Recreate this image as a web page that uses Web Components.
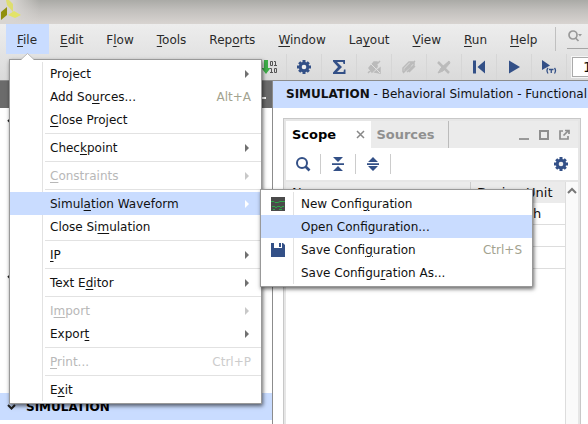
<!DOCTYPE html>
<html lang="en">
<head>
<meta charset="utf-8">
<title>Simulation</title>
<style>
  html, body { height: 100%; margin: 0; overflow: hidden; }
  body { font: 12px/16px "DejaVu Sans", sans-serif; color: #1a1a1a; background: #fff; }
</style>
</head>
<body>
<ide-window></ide-window>

<template id="t-window">
<style>
  :host { display: flex; flex-direction: column; height: 100vh; position: relative; overflow: hidden; }
  .title { flex: none; height: 24px; background: linear-gradient(#aaaaa6, #c0bebb 40%, #d8d4d1); }
  .title::before { content: ""; position: absolute; width: 40px; height: 24px; background: linear-gradient(90deg, #d8d5d2 30%, transparent); }
  .title svg { display: block; position: relative; }
  .top { flex: none; background: linear-gradient(#ededed, #dadada); border-bottom: 1px solid #8c8c8c; }
  .menus { display: flex; height: 30px; padding-left: 6px; }
  .divider { margin: 3px 11px 3px 6px; width: 1px; background: #c0c0c0; flex: none; }
  .search { display: flex; align-items: center; padding: 0; border: 0; border-bottom: 1px solid #a5a5a5; background: none; height: 25px; flex: 1; overflow: hidden; }
  .search svg { flex: none; }
  .tools { display: flex; height: 26px; justify-content: flex-end; overflow: hidden; }
  .time { box-sizing: border-box; width: 16px; height: 20px; margin: 3px 0 0 5px; border: 1px solid #aaa; border-right: 0; outline: 1px solid #f5f5f5; padding: 0 0 0 10px; font: 14px "DejaVu Sans", sans-serif; background: #fff; color: #111; }
  .main { flex: 1; display: flex; min-height: 0; }
  flow-navigator { width: 272px; flex: none; }
  sim-area { flex: 1; min-width: 0; border-left: 1px solid #8c8c8c; }
  .file { position: absolute; left: 9px; top: 59px; width: 253px; }
  .wave { position: absolute; left: 260px; top: 189px; width: 273px; }
  .notch { position: absolute; left: 20px; top: 53px; }
</style>
<div class="title"><svg width="22" height="21" viewBox="0 0 22 21"><path d="M6 0h3l4 4v8L7 5z" fill="#dede70"/><path d="M1 12l6-5v8l-6 5z" fill="#91900d"/><path d="M8 15l6-4 7 4-6 3z" fill="#e2e368"/></svg></div>
<div class="top">
  <nav class="menus" aria-label="Main">
    <menu-tab open><u>F</u>ile</menu-tab><menu-tab><u>E</u>dit</menu-tab><menu-tab>F<u>l</u>ow</menu-tab><menu-tab><u>T</u>ools</menu-tab><menu-tab>Rep<u>o</u>rts</menu-tab><menu-tab><u>W</u>indow</menu-tab><menu-tab>La<u>y</u>out</menu-tab><menu-tab><u>V</u>iew</menu-tab><menu-tab><u>R</u>un</menu-tab><menu-tab><u>H</u>elp</menu-tab>
    <div class="divider"></div>
    <button class="search" aria-label="Quick access"><svg width="16" height="14" viewBox="0 0 16 14" fill="none" stroke="#999" stroke-width="1.7"><circle cx="6" cy="6" r="4"/><path d="M8.500 9l3 3"/><path d="M11 5h4l-2 2.500z" fill="#999" stroke="none"/></svg></button>
  </nav>
  <div class="tools">
    <tool-button label="Generate bitstream"><svg width="16" height="16" viewBox="0 0 16 16"><path d="M3 1h4v8h2.500L5 15 .5 9H3z" fill="#3fae4a"/><g fill="none" stroke="#555"><path d="M9.500 2.500h2v4h-2zM13 2.500h1.500v4M13 6.500h3M9 9.500h1.500v4M9 13.500h3M13.500 9.500h2v4h-2z"/></g></svg></tool-button>
    <tool-button label="Settings"><gear-icon></gear-icon></tool-button>
    <tool-button label="Report summary"><svg width="16" height="16" viewBox="0 0 16 16"><path d="M2 1h12v4h-1.500L12 3H6l5 5-5 5h6.500l.5-2.500h1.500V15H2v-1.500L7 8 2 2.500z" fill="#335087"/></svg></tool-button>
    <tool-button label="Highlight"><svg width="16" height="16" viewBox="0 0 16 16"><path d="M2 14L14 2M3 9l5-6 3 0 0 5-5 5zM9 13l5-4v5z" fill="#bbb" stroke="#bbb" stroke-width="1.500"/><path d="M2 2l12 12" stroke="#e0e0e0"/></svg></tool-button>
    <tool-button label="Mark"><svg width="16" height="16" viewBox="0 0 16 16" fill="none" stroke="#bbb" stroke-width="1.500"><path d="M2 13V9l6-6 3 0-7 7v2l6-5M6 13l7-7V3l-3 3M2 14L14 2M8 13l6-6"/></svg></tool-button>
    <tool-button label="Unmark"><svg width="16" height="16" viewBox="0 0 16 16" fill="none" stroke="#bbb"><path d="M2 3l11 11" stroke-width="2.500"/><path d="M2 14l3-5 8-7 1 2-7 8z" fill="#bbb"/></svg></tool-button>
    <tool-button label="Restart"><svg width="16" height="16" viewBox="0 0 16 16"><path d="M2 1.500h3v13H2zM14 1.500v13L6.500 8z" fill="#335087"/></svg></tool-button>
    <tool-button label="Run all"><svg width="16" height="16" viewBox="0 0 16 16"><path d="M3 1.500L14 8 3 14.500z" fill="#335087"/></svg></tool-button>
    <tool-button label="Run for time"><svg width="16" height="16" viewBox="0 0 16 16"><path d="M1 1l8 5.500L1 11z" fill="#335087"/><path d="M7 9q-2 2.500 0 5.500M13.500 9q2 2.500 0 5.500M8 10.500h4.500M10.250 10.500V14" fill="none" stroke="#335087" stroke-width="1.300"/></svg></tool-button>
    <input class="time" aria-label="Run time" value="10">
  </div>
</div>
<div class="main"><flow-navigator></flow-navigator><sim-area></sim-area></div>
<popup-menu class="file">
  <menu-entry sub>Pro<u>j</u>ect</menu-entry>
  <menu-entry keys="Alt+A">Add So<u>u</u>rces...</menu-entry>
  <menu-entry><u>C</u>lose Project</menu-entry>
  <menu-line></menu-line>
  <menu-entry sub>Chec<u>k</u>point</menu-entry>
  <menu-line></menu-line>
  <menu-entry sub disabled><u>C</u>onstraints</menu-entry>
  <menu-line></menu-line>
  <menu-entry sub active>Simul<u>a</u>tion Waveform</menu-entry>
  <menu-entry>Close Si<u>m</u>ulation</menu-entry>
  <menu-line></menu-line>
  <menu-entry sub><u>I</u>P</menu-entry>
  <menu-line></menu-line>
  <menu-entry sub>Text E<u>d</u>itor</menu-entry>
  <menu-line></menu-line>
  <menu-entry sub disabled>I<u>m</u>port</menu-entry>
  <menu-entry sub>Expor<u>t</u></menu-entry>
  <menu-line></menu-line>
  <menu-entry disabled keys="Ctrl+P"><u>P</u>rint...</menu-entry>
  <menu-line></menu-line>
  <menu-entry>E<u>x</u>it</menu-entry>
</popup-menu>
<svg class="notch" width="16" height="8" viewBox="0 0 16 8"><path d="M1 7L7.500 .5 14 7v1H1z" fill="#fff"/><path d="M1 6.500L7.500 .5 14 6.500" fill="none" stroke="#bbb"/></svg>
<popup-menu class="wave">
  <menu-entry><svg slot="icon" width="14" height="14" viewBox="0 0 14 14"><path d="M0 0h14v14H0z" fill="#4a4a4a"/><path d="M0 4.500h3l1 1h3l2-1h5M1 9.500h3l1 1.500 1-1.500h3l1 1.500 1-1.500h2M2 12.500h2M8 12.500h3" fill="none" stroke="#2fa84a"/></svg>New Confi<u>g</u>uration</menu-entry>
  <menu-entry active>Open Configuration...</menu-entry>
  <menu-entry keys="Ctrl+S"><svg slot="icon" width="14" height="14" viewBox="0 0 14 14"><path d="M0 0h3v5h8V0h1l2 2v12H0z" fill="#335087"/><path d="M3 0h8v5H3z" fill="#fff"/><path d="M8 0h2v4H8z" fill="#335087"/></svg>Save Confi<u>g</u>uration</menu-entry>
  <menu-entry>Save Configu<u>r</u>ation As...</menu-entry>
</popup-menu>
</template>

<template id="t-tab">
<style>
  :host { display: block; flex: none; }
  button { height: 30px; border: 0; padding: 2px 12px 0 11px; background: none; font: inherit; color: #2a2a2a; }
  :host([open]) button { background: #c9dcff; }
  ::slotted(u) { text-underline-offset: 2px; text-decoration-thickness: 1px; }
</style>
<button><slot></slot></button>
</template>

<template id="t-tool">
<style>
  :host { display: block; flex: none; width: 34px; border-right: 1px solid #d6d6d6; }
  button { width: 100%; height: 26px; border: 0; padding: 0; background: none; display: grid; place-items: center; }
</style>
<button><slot></slot></button>
</template>

<template id="t-gear">
<style>:host, svg { display: block; }</style>
<svg width="14" height="14" viewBox="-7 -7 14 14"><g fill="#335087"><circle r="5.200"/><path d="M-1.500-7h3V7h-3zM-7-1.500H7v3H-7z"/><path d="M-1.500-6.800h3V6.800h-3zM-6.800-1.500H6.800v3H-6.800z" transform="rotate(45)"/></g><circle r="2.300" fill="#f0f0f0"/></svg>
</template>

<template id="t-popup">
<style>
  :host { display: block; box-sizing: border-box; background: #fff; border: 1px solid #999; padding: 2px 0; box-shadow: 1px 2px 4px #0009; }
  div { background: linear-gradient(#e2e2e2, #e2e2e2) 32px 0 / 1px 100% no-repeat; }
</style>
<div role="menu"><slot></slot></div>
</template>

<template id="t-entry">
<style>
  :host { display: block; }
  button { width: 100%; height: 23px; border: 0; padding: 0 10px 0 0; background: none; display: flex; align-items: center; font: inherit; color: #111; text-align: left; }
  :host([active]) button { background: #c9dcff; }
  :host([disabled]) button { color: #b8b8b8; }
  .icon { width: 40px; flex: none; display: flex; padding-left: 10px; box-sizing: border-box; }
  .text { flex: 1; white-space: nowrap; }
  .keys { color: #a3a38f; }
  :host([disabled]) .keys { color: #ccc; }
  .arrow { display: none; margin-right: 2px; color: #707070; }
  :host([sub]) .arrow { display: block; }
  :host([disabled]) .arrow { color: #c8c8c8; }
  :host([active]) .arrow { color: #fff; }
  ::slotted(u) { text-underline-offset: 2px; text-decoration-thickness: 1px; }
</style>
<button role="menuitem"><span class="icon"><slot name="icon"></slot></span><span class="text"><slot></slot></span><span class="keys"></span><svg class="arrow" width="4" height="8" viewBox="0 0 4 8"><path d="M0 0l4 4-4 4z" fill="currentColor"/></svg></button>
</template>

<template id="t-line">
<style>:host { display: block; height: 1px; margin: 2px 0 2px 35px; background: #e2e2e2; }</style>
</template>

<template id="t-nav">
<style>
  :host { display: flex; flex-direction: column; background: #fff; }
  .head { height: 27px; flex: none; background: #6b6b6b; display: flex; justify-content: flex-end; }
  button { border: 0; background: none; padding: 0; font: inherit; }
  .min { width: 11px; }
  .min::before { content: ""; display: block; width: 5px; height: 2px; background: #fff; margin-top: 6px; }
  .sec { height: 27px; display: flex; align-items: center; padding-left: 7px; gap: 10px; font-weight: bold; flex: none; color: #000; text-align: left; }
  .b { margin-top: 129px; }
  .cur { margin-top: 102px; background: #c9dcff; }
  path { fill: none; stroke: #222; stroke-width: 2; }
</style>
<div class="head"><button class="min" aria-label="Minimize"></button></div>
<button class="sec" aria-label="Project manager"><svg width="9" height="6" viewBox="0 0 9 6"><path d="M1 1l3.500 3.500L8 1"/></svg></button>
<button class="sec b" aria-label="IP integrator"><svg width="9" height="6" viewBox="0 0 9 6"><path d="M1 1l3.500 3.500L8 1"/></svg></button>
<button class="sec cur"><svg width="9" height="6" viewBox="0 0 9 6"><path d="M1 1l3.500 3.500L8 1"/></svg>SIMULATION</button>
</template>

<template id="t-sim">
<style>
  :host { display: flex; flex-direction: column; background: #fff; }
  header { height: 27px; line-height: 26px; flex: none; background: #c9dcff; color: #111; padding-left: 13px; white-space: nowrap; overflow: hidden; }
  scope-panel { flex: 1; margin: 10px 7px 0 10px; min-height: 0; }
</style>
<header><b>SIMULATION</b> - Behavioral Simulation - Functional</header>
<scope-panel></scope-panel>
</template>

<template id="t-scope">
<style>
  :host { border: 1px solid #c8c8c8; border-bottom: 0; background: #e6e6e6; padding: 2px 2px 0; display: flex; flex-direction: column; }
  button { border: 0; background: none; padding: 0; font: inherit; display: grid; place-items: center; }
  .tabs { display: flex; height: 27px; background: #ebebeb; flex: none; }
  .scope, .sources { font-size: 13px; font-weight: bold; }
  .scope { background: #fff; display: flex; align-items: center; width: 85px; padding: 0 6px; box-sizing: border-box; justify-content: space-between; color: #000; }
  .sources { width: 78px; border-right: 1px solid #bbb; color: #909090; padding-right: 8px; }
  .ctl { margin-left: auto; display: flex; gap: 8px; padding-right: 8px; }
  .tools { display: flex; height: 32px; background: #fff; align-items: center; flex: none; margin-bottom: 2px; }
  .tools button { width: 34px; height: 20px; border-right: 1px solid #ccc; box-sizing: content-box; }
  .tools .set { margin-left: auto; border: 0; }
  .body { display: flex; flex: 1; background: #fff; min-height: 0; overflow: hidden; }
  .grid { flex: 1; }
  table { width: 100%; border-collapse: collapse; table-layout: fixed; font-size: 13px; color: #111; }
  th { background: #ebebeb; height: 21px; text-align: left; font-weight: normal; padding: 0 6px; }
  th + th { border-left: 1px solid #ccc; width: 82px; white-space: nowrap; }
  td { height: 21px; border-bottom: 1px solid #ddd; padding: 0 6px; }
  .bar { width: 12px; flex: none; border-left: 1px solid #ddd; background: #fafafa; padding-top: 5px; }
  svg { display: block; }
</style>
<div class="tabs">
  <div class="scope">Scope<button aria-label="Close Scope"><svg width="9" height="9" viewBox="0 0 9 9"><path d="M1 1l7 7M8 1L1 8" stroke="#888" stroke-width="1.500"/></svg></button></div>
  <button class="sources">Sources</button>
  <div class="ctl">
    <button aria-label="Minimize"><svg width="12" height="12" viewBox="0 0 12 12"><path d="M1 9h10v2H1z" fill="#999"/></svg></button>
    <button aria-label="Maximize"><svg width="12" height="12" viewBox="0 0 12 12"><path d="M2 2h8v8H2z" fill="none" stroke="#8e8e8e" stroke-width="2"/></svg></button>
    <button aria-label="Float"><svg width="12" height="12" viewBox="0 0 12 12" fill="none" stroke="#8e8e8e" stroke-width="1.700"><path d="M5 2H2v8h8V7M5.500 6.500L10 2M7 1.500h4V5"/></svg></button>
  </div>
</div>
<div class="tools">
  <button aria-label="Search"><svg width="16" height="16" viewBox="0 0 16 16" fill="none" stroke="#335087"><circle cx="7" cy="7" r="5" stroke-width="2"/><path d="M10.500 10.500l4 4" stroke-width="2.600"/></svg></button>
  <button aria-label="Collapse all"><svg width="12" height="14" viewBox="0 0 12 14" fill="#335087"><path d="M1 0h10L6 5zM0 6.200h12v1.800H0zM1 14h10L6 9z"/></svg></button>
  <button aria-label="Expand all"><svg width="12" height="14" viewBox="0 0 12 14" fill="#335087"><path d="M1 5h10L6 0zM0 6.200h12v1.800H0zM1 9h10l-5 5z"/></svg></button>
  <button class="set" aria-label="Scope settings"><gear-icon></gear-icon></button>
</div>
<div class="body">
  <div class="grid"><table><thead><tr><th>Name</th><th>Design Unit</th></tr></thead><tbody><tr><td></td><td>testbench</td></tr><tr><td></td><td></td></tr><tr><td></td><td></td></tr></tbody></table></div>
  <div class="bar"><svg width="12" height="7" viewBox="0 0 12 7"><path d="M2 6l4-4 4 4" fill="none" stroke="#777" stroke-width="2"/></svg></div>
</div>
</template>

<script>
  // Clones the template of the given id into an open shadow root.
  class Templated extends HTMLElement {
    constructor() {
      super();
      this.attachShadow({ mode: "open" })
        .append(document.getElementById(this.constructor.template).content.cloneNode(true));
    }
  }
  const define = (name, template) =>
    customElements.define(name, class extends Templated { static template = template; });

  define("gear-icon", "t-gear");
  define("menu-tab", "t-tab");
  define("menu-line", "t-line");
  define("popup-menu", "t-popup");
  define("flow-navigator", "t-nav");
  define("scope-panel", "t-scope");
  define("sim-area", "t-sim");

  customElements.define("tool-button", class extends Templated {
    static template = "t-tool";
    connectedCallback() {
      this.shadowRoot.querySelector("button").setAttribute("aria-label", this.getAttribute("label"));
    }
  });
  customElements.define("menu-entry", class extends Templated {
    static template = "t-entry";
    connectedCallback() {
      this.shadowRoot.querySelector(".keys").textContent = this.getAttribute("keys") || "";
      this.shadowRoot.querySelector("button").disabled = this.hasAttribute("disabled");
    }
  });
  define("ide-window", "t-window");
</script>
</body>
</html>
